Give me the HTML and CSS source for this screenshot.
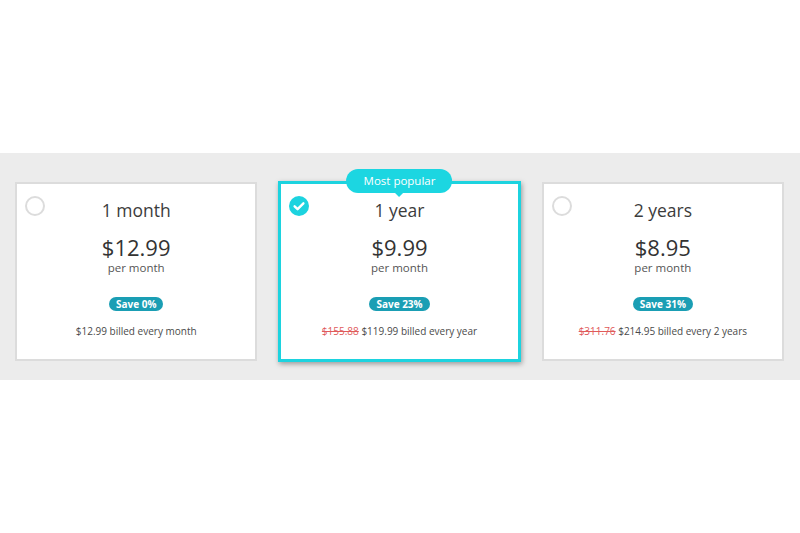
FILE: index.html
```html
<!DOCTYPE html>
<html lang="en">
<head>
<meta charset="utf-8">
<title>Plans</title>
<link rel="stylesheet" href="styles.css">
</head>
<body>
<section class="band">
  <div class="plans">
    <div class="plan">
      <span class="radio"></span>
      <div class="term">1 month</div>
      <div class="price">$12.99</div>
      <div class="per">per month</div>
      <div class="save">Save 0%</div>
      <div class="billed">$12.99 billed every month</div>
    </div>
    <div class="plan selected">
      <div class="popular">Most popular</div>
      <span class="check"><svg viewBox="0 0 20 20" width="20" height="20"><circle cx="10" cy="10" r="10" fill="#1cd3df"/><path d="M5.6 10.3 L8.6 13.2 L14.4 7.3" fill="none" stroke="#fff" stroke-width="2.4" stroke-linecap="round" stroke-linejoin="round"/></svg></span>
      <div class="term">1 year</div>
      <div class="price">$9.99</div>
      <div class="per">per month</div>
      <div class="save">Save 23%</div>
      <div class="billed"><s class="old">$155.88</s> $119.99 billed every year</div>
    </div>
    <div class="plan">
      <span class="radio"></span>
      <div class="term">2 years</div>
      <div class="price">$8.95</div>
      <div class="per">per month</div>
      <div class="save">Save 31%</div>
      <div class="billed"><s class="old">$311.76</s> $214.95 billed every 2 years</div>
    </div>
  </div>
</section>
</body>
</html>
```

FILE: styles.css
```css
html, body {
  margin: 0;
  padding: 0;
  background: #fff;
}
body {
  font-family: "Open Sans", "Liberation Sans", sans-serif;
  min-height: 100vh;
  display: flex;
  flex-direction: column;
  justify-content: center;
}
.band {
  background: #ececec;
  padding: 29px 16px 19px 15px;
}
.plans {
  display: grid;
  grid-template-columns: repeat(3, 1fr);
  gap: 21px;
}
.plan {
  position: relative;
  background: #fff;
  border: 2px solid #dcdcdc;
  padding: 15px 10px 21px;
  display: flex;
  flex-direction: column;
  align-items: center;
  color: #3a3a3a;
}
.plan.selected {
  border: 3px solid #1cd3df;
  margin: -1px 0;
  box-shadow: 1px 2px 5px rgba(0,0,0,0.35);
}
.radio {
  position: absolute;
  top: 12px;
  left: 8px;
  width: 16px;
  height: 16px;
  border: 2px solid #dcdcdc;
  border-radius: 50%;
}
.check {
  position: absolute;
  top: 12px;
  left: 8px;
  width: 20px;
  height: 20px;
  display: block;
}
.check svg { display: block; }
.popular {
  position: absolute;
  top: -15px;
  left: 50%;
  transform: translateX(-50%);
  background: #1cd6e1;
  color: #fff;
  font-size: 11.5px;
  line-height: 24px;
  height: 24px;
  padding: 0 17px;
  border-radius: 12px;
  white-space: nowrap;
}
.popular::after {
  content: "";
  position: absolute;
  left: 50%;
  bottom: -4px;
  margin-left: -4px;
  border-left: 4px solid transparent;
  border-right: 4px solid transparent;
  border-top: 4px solid #1cd6e1;
}
.term {
  font-size: 17.5px;
  line-height: 23px;
  color: #3c3c3c;
}
.price {
  margin-top: 13px;
  font-size: 22px;
  line-height: 24px;
  color: #333;
}
.per {
  margin-top: 1px;
  font-size: 11.5px;
  line-height: 15px;
  color: #555;
}
.save {
  margin-top: 22px;
  background: #1a9eb4;
  color: #fff;
  font-weight: 700;
  font-size: 10px;
  line-height: 14px;
  padding: 0 7px;
  border-radius: 8px;
}
.billed {
  margin-top: 13px;
  font-size: 10px;
  line-height: 14px;
  color: #4a4a4a;
}
.old {
  color: #e05b5b;
  text-decoration: line-through;
}
```
